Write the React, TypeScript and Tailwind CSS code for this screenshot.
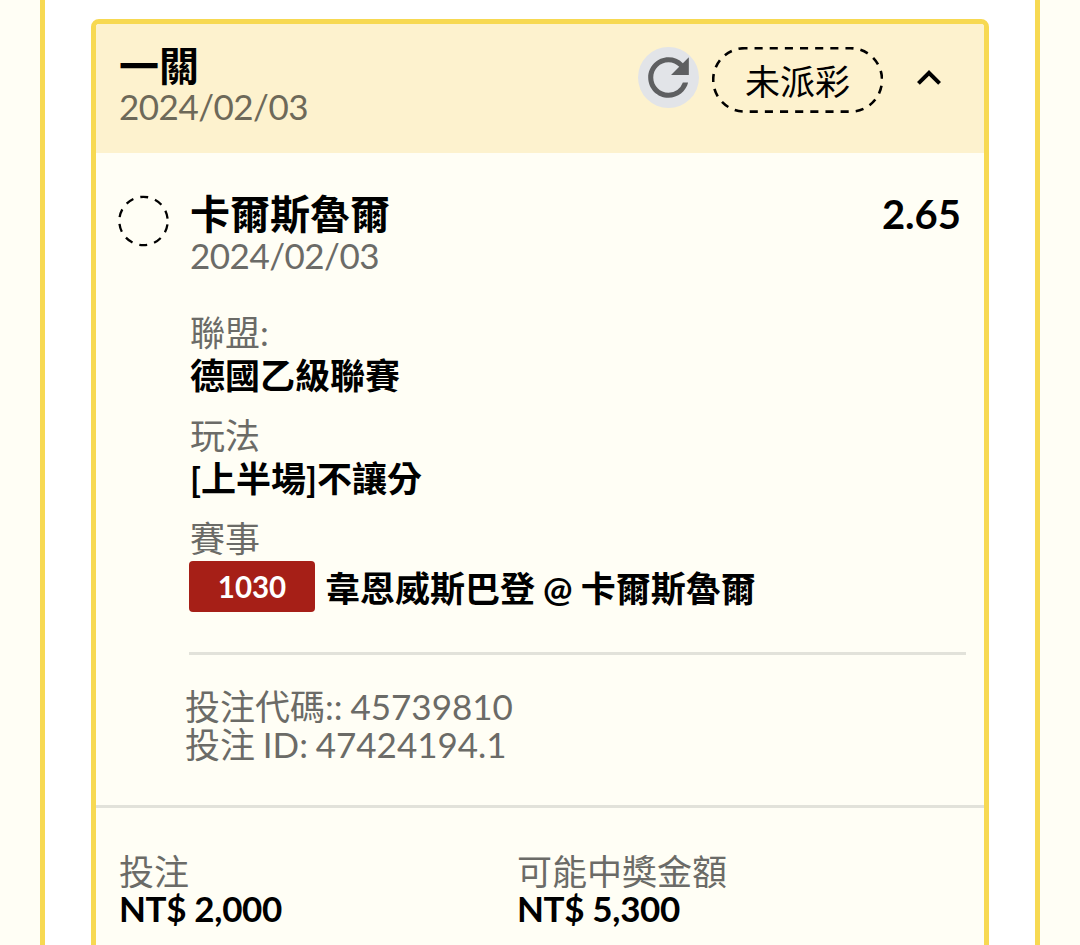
import type { ReactNode } from 'react'
import { MdExpandLess, MdRefresh } from 'react-icons/md'

const details = [
  { label: '聯盟:', value: '德國乙級聯賽' },
  { label: '玩法', value: '[上半場]不讓分' },
]

const amounts = [
  { label: '投注', value: 'NT$ 2,000' },
  { label: '可能中獎金額', value: 'NT$ 5,300' },
]

function Label({ children }: { children: ReactNode }) {
  return <div className="h-[43px] text-[35px] leading-[43px] text-[#6b6b67]">{children}</div>
}

function StatusPill({ children }: { children: ReactNode }) {
  return (
    <div className="relative ml-[13px] flex h-[66px] w-[171px] items-center justify-center text-[35px] leading-none">
      <svg className="absolute inset-0" width="171" height="66" fill="none">
        <rect
          x="1.2"
          y="1.2"
          width="168.8"
          height="63.4"
          rx="31.5"
          stroke="#000"
          strokeWidth="2.6"
          strokeDasharray="8.1 7.05"
          strokeDashoffset="5.3"
        />
      </svg>
      <span className="relative top-px">{children}</span>
    </div>
  )
}

function PendingMark() {
  return (
    <svg className="mt-[42px] shrink-0" width="52" height="52" fill="none">
      <circle cx="25.5" cy="26" r="24.2" stroke="#000" strokeWidth="2.3" strokeDasharray="8.1 7.105" strokeDashoffset="11.65" />
    </svg>
  )
}

export default function App() {
  return (
    <div className="flex h-[945px] w-[1080px] justify-center overflow-hidden bg-[#fffef5] font-[Lato,'Noto_Sans_CJK_TC',sans-serif] text-black">
      <div className="w-[1000px] border-x-5 border-[#f7d952] bg-white px-[46px] pt-[19px]">
        <div className="h-[960px] overflow-hidden rounded-lg border-5 border-[#f7d952] bg-[#fffef5]">
          <header className="flex h-[129px] items-start bg-[#fdf2ce] pt-[23px] pl-[23px]">
            <div className="-mt-px flex-1">
              <h2 className="h-10 text-[40px] leading-10 font-bold">一關</h2>
              <p className="text-[35px] leading-[40px] tracking-[-0.5px] text-[#6d6959]">2024/02/03</p>
            </div>
            <button className="flex size-[61px] items-center justify-center rounded-full bg-[#e2e4e8] text-[#5e5f61]">
              <MdRefresh size={61} />
            </button>
            <StatusPill>未派彩</StatusPill>
            <button className="mt-[7px] mr-[31px] ml-[22px]">
              <MdExpandLess size={48} />
            </button>
          </header>

          <section className="flex h-[655px] border-b-3 border-[#e2e2da] pl-[22px]">
            <PendingMark />
            <div className="ml-[19px] flex-1 pt-[41px] pr-[18px]">
              <div className="flex h-10 items-center justify-between text-[40px] leading-10 font-bold">
                <h3 className="pl-px">卡爾斯魯爾</h3>
                <span className="pr-[5px]">2.65</span>
              </div>
              <p className="pl-px text-[35px] leading-[43px] tracking-[-0.5px] text-[#6b6b67]">2024/02/03</p>

              <div className="mt-[34px] pl-px">
                {details.map((item) => (
                  <div key={item.label} className="mb-[17px]">
                    <Label>{item.label}</Label>
                    <div className="h-[43px] text-[35px] leading-[43px] font-bold">{item.value}</div>
                  </div>
                ))}
                <Label>賽事</Label>
              </div>

              <div className="mt-px flex h-[51px] items-center">
                <span className="h-[51px] w-[126px] rounded bg-[#a61f17] text-center text-[29.5px] leading-[51px] font-bold text-white">
                  1030
                </span>
                <span className="ml-[10px] pt-1 text-[35px] leading-[47px] font-bold [word-spacing:-0.4px]">
                  韋恩威斯巴登 @ 卡爾斯魯爾
                </span>
              </div>

              <div className="mt-10 border-t-3 border-[#e2e2da]" />

              <div className="-ml-[4px] pt-[32px] text-[35px] leading-[38px] text-[#6b6b67]">
                <p className="[word-spacing:-1px]">投注代碼:: 45739810</p>
                <p className="[word-spacing:-1.2px]">投注 ID: 47424194.1</p>
              </div>
            </div>
          </section>

          <footer className="flex pt-[45px] pl-[23px]">
            {amounts.map((item) => (
              <div key={item.label} className="w-[398px] shrink-0">
                <div className="text-[35px] leading-[36px] text-[#6b6b67]">{item.label}</div>
                <div className="text-[35px] leading-[38px] font-bold tracking-[-0.35px]">{item.value}</div>
              </div>
            ))}
          </footer>
        </div>
      </div>
    </div>
  )
}
